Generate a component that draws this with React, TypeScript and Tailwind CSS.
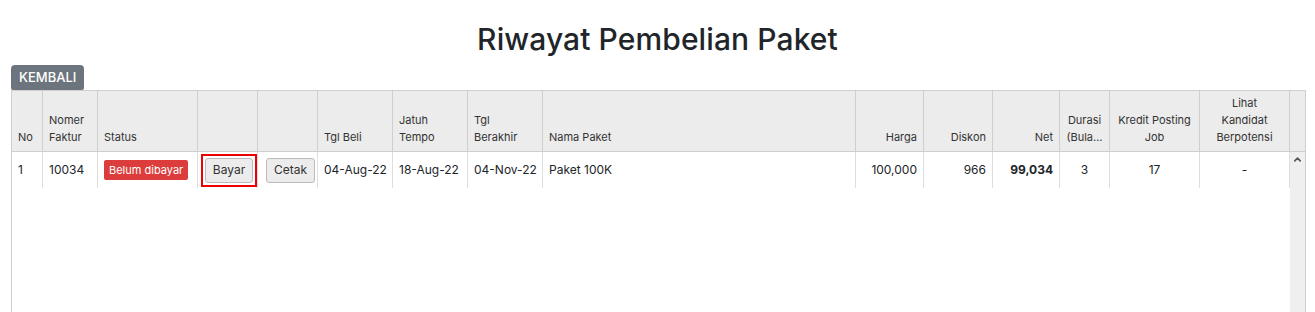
import { ChevronUp } from 'lucide-react';

const cols = [
    { key: 'no', label: ['No'], w: 31, align: 'left' },
    { key: 'faktur', label: ['Nomer', 'Faktur'], w: 55, align: 'left' },
    { key: 'status', label: ['Status'], w: 100, align: 'left' },
    { key: 'bayar', label: [], w: 60, align: 'left' },
    { key: 'cetak', label: [], w: 60, align: 'left' },
    { key: 'tglBeli', label: ['Tgl Beli'], w: 75, align: 'left' },
    { key: 'jatuh', label: ['Jatuh', 'Tempo'], w: 75, align: 'left' },
    { key: 'akhir', label: ['Tgl', 'Berakhir'], w: 75, align: 'left' },
    { key: 'nama', label: ['Nama Paket'], w: 313, align: 'left' },
    { key: 'harga', label: ['Harga'], w: 68, align: 'right' },
    { key: 'diskon', label: ['Diskon'], w: 69, align: 'right' },
    { key: 'net', label: ['Net'], w: 67, align: 'right' },
    { key: 'durasi', label: ['Durasi', '(Bula…'], w: 50, align: 'center' },
    { key: 'kredit', label: ['Kredit Posting', 'Job'], w: 90, align: 'center' },
    { key: 'lihat', label: ['Lihat', 'Kandidat', 'Berpotensi'], w: 90, align: 'center' },
];

const alignCls: Record<string, string> = {
    left: 'justify-start text-left',
    right: 'justify-end text-right',
    center: 'justify-center text-center',
};

export default function App() {
    return (
        <div className="w-full h-[312px] overflow-hidden bg-white text-[#212529]" style={{ fontFamily: 'Inter, "Noto Sans", sans-serif' }}>
            {/* Title */}
            <h1 className="pt-[19px] h-[65px] text-center text-[30px] leading-[40px] font-medium tracking-[0.1px] text-[#212529]">
                Riwayat Pembelian Paket
            </h1>

            {/* Back button */}
            <div className="pl-[11px]">
                <button className="block h-[25px] px-[8px] bg-[#6c757d] text-white text-[13px] font-medium rounded-t-[4px] rounded-b-[2px] leading-[25px]">
                    KEMBALI
                </button>
            </div>

            {/* Grid */}
            <div className="ml-[11px] mr-[9px] border border-[#cfcfcf] h-[240px]">
                {/* Header */}
                <div className="flex h-[61px] bg-[#ececec] border-b border-[#cfcfcf] text-[11px] leading-[17px] text-[#333]">
                    {cols.map((c) => (
                        <div
                            key={c.key}
                            className={`flex items-end shrink-0 border-r border-[#cfcfcf] px-[6px] pb-[5px] ${alignCls[c.align]}`}
                            style={{ width: c.w }}
                        >
                            <div>
                                {c.label.map((l) => (
                                    <div key={l} className="whitespace-nowrap">{l}</div>
                                ))}
                            </div>
                        </div>
                    ))}
                    <div className="flex-1" />
                </div>

                {/* Body */}
                <div className="flex h-full">
                    <div className="flex h-[36px] text-[12px] text-[#212529] whitespace-nowrap">
                        <Cell w={31}>1</Cell>
                        <Cell w={55}>10034</Cell>
                        <Cell w={100}>
                            <span className="bg-[#dc3c3c] text-white text-[11px] px-[5px] h-[20px] leading-[20px] rounded-[2px]">Belum dibayar</span>
                        </Cell>
                        <Cell w={60} pad="px-[3px]">
                            <div className="shrink-0 border-[2px] border-[#ee0000] h-[33px] w-[56px] flex items-center justify-center">
                                <button className="shrink-0 h-[25px] w-[48px] bg-[#ececec] border border-[#bbb] rounded-[3px] text-[12px] text-[#333]">Bayar</button>
                            </div>
                        </Cell>
                        <Cell w={60} pad="px-[8px]">
                            <button className="shrink-0 h-[25px] w-[49px] bg-[#ececec] border border-[#bbb] rounded-[3px] text-[12px] text-[#333]">Cetak</button>
                        </Cell>
                        <Cell w={75}>04-Aug-22</Cell>
                        <Cell w={75}>18-Aug-22</Cell>
                        <Cell w={75}>04-Nov-22</Cell>
                        <Cell w={313}>Paket 100K</Cell>
                        <Cell w={68} align="right">100,000</Cell>
                        <Cell w={69} align="right">966</Cell>
                        <Cell w={67} align="right"><span className="font-bold">99,034</span></Cell>
                        <Cell w={50} align="center">3</Cell>
                        <Cell w={90} align="center">17</Cell>
                        <Cell w={90} align="center">-</Cell>
                    </div>
                    <div className="flex-1" />
                    {/* Scrollbar */}
                    <div className="w-[17px] h-full bg-[#efefef] flex justify-center pt-[2px]">
                        <ChevronUp size={11} strokeWidth={3.5} className="text-[#555]" />
                    </div>
                </div>
            </div>
        </div>
    );
}

function Cell({ w, children, align = 'left', pad = 'px-[6px]' }: { w: number; children: React.ReactNode; align?: string; pad?: string }) {
    return (
        <div
            className={`flex items-center shrink-0 border-r border-[#dedede] ${pad} ${alignCls[align]}`}
            style={{ width: w }}
        >
            {children}
        </div>
    );
}
